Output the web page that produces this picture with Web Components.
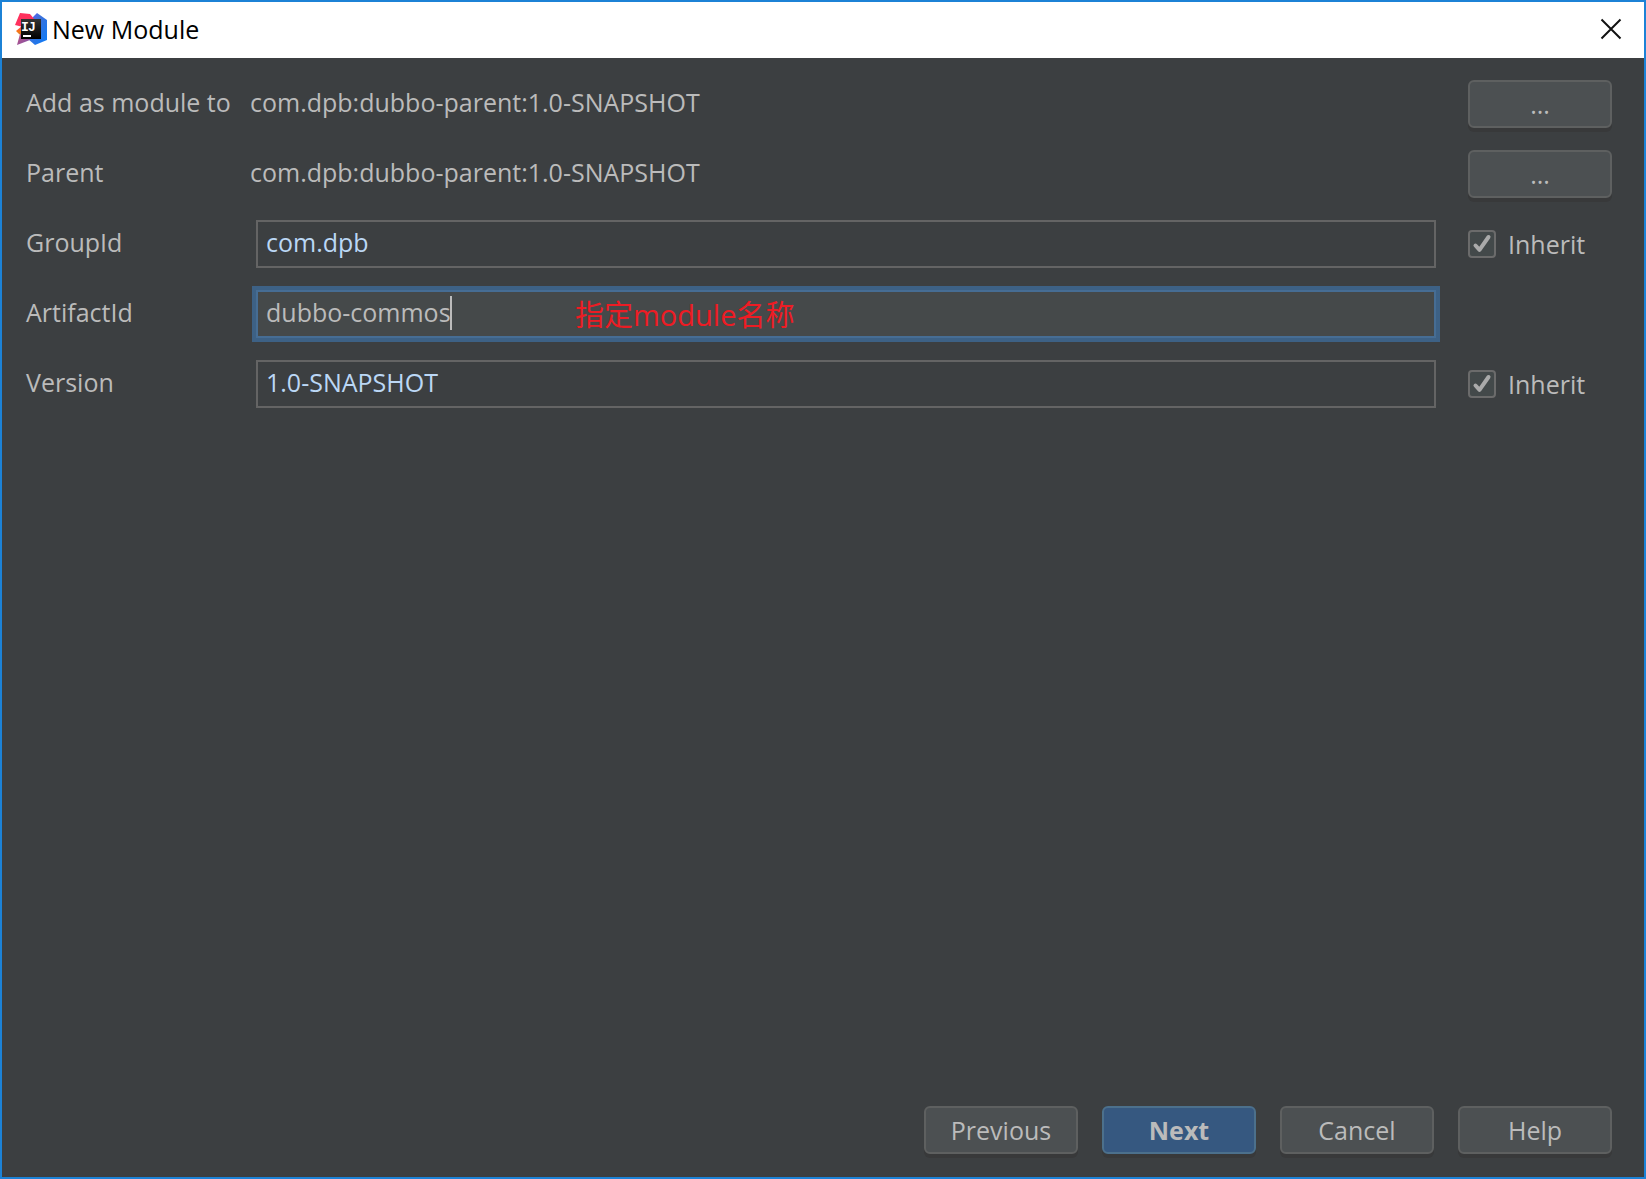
<!DOCTYPE html>
<html lang="en">
<head>
<meta charset="utf-8">
<title>New Module</title>
<style>
  :root {
    --bg: #3c3f41;
    --text: #bbbbbb;
    --line: #646464;
  }
  body {
    margin: 0;
    background: var(--bg);
    color: var(--text);
    font: 25px/34px "Open Sans", "Noto Sans", "Noto Sans CJK SC", sans-serif;
  }
</style>
</head>
<body>
<module-dialog>
  <value-row slot="rows" label="Add as module to" value="com.dpb:dubbo-parent:1.0-SNAPSHOT"></value-row>
  <value-row slot="rows" label="Parent" value="com.dpb:dubbo-parent:1.0-SNAPSHOT"></value-row>
  <input-row slot="rows" label="GroupId" value="com.dpb" inherited><inherit-box></inherit-box></input-row>
  <input-row slot="rows" label="ArtifactId" value="dubbo-commos" active><span slot="note">指定module名称</span></input-row>
  <input-row slot="rows" label="Version" value="1.0-SNAPSHOT" inherited><inherit-box></inherit-box></input-row>
  <dialog-button slot="actions">Previous</dialog-button>
  <dialog-button slot="actions" primary>Next</dialog-button>
  <dialog-button slot="actions">Cancel</dialog-button>
  <dialog-button slot="actions">Help</dialog-button>
</module-dialog>

<script>
const shadow = (el, html) => {
  const root = el.attachShadow({ mode: "open" });
  const t = document.createElement("template");
  t.innerHTML = html;
  root.append(t.content.cloneNode(true));
  return root;
};

const rowStyles = `
  :host { display: grid; grid-template-columns: 224px minmax(0, 1fr) 144px; height: 48px; }
  .caption { box-sizing: border-box; height: 48px; padding: 5px 0 9px; white-space: nowrap; }
`;

customElements.define("dialog-button", class extends HTMLElement {
  connectedCallback() {
    if (this.shadowRoot) return;
    shadow(this, `
      <style>
        :host { display: block; width: 154px; }
        button {
          display: block; box-sizing: border-box; width: 100%; height: 48px; padding: 0;
          font: inherit; color: inherit; background: #4c5052;
          border: 2px solid #5e6060; border-radius: 6px; box-shadow: 0 4px 0 #38393a;
        }
        :host([primary]) button { font-weight: 700; background: #365880; border-color: #4c708c; }
      </style>
      <button type="button"><slot></slot></button>`);
  }
});

customElements.define("inherit-box", class extends HTMLElement {
  connectedCallback() {
    if (this.shadowRoot) return;
    shadow(this, `
      <style>
        :host { display: block; }
        label { display: flex; align-items: center; gap: 12px; height: 48px; }
        .box { display: grid; width: 28px; height: 28px; }
        .box > * { grid-area: 1 / 1; }
        input {
          appearance: none; box-sizing: border-box; width: 28px; height: 28px; margin: 0;
          background: #43494a; border: 2px solid #6b6b6b; border-radius: 4px;
        }
        svg { pointer-events: none; }
        input:not(:checked) + svg { visibility: hidden; }
      </style>
      <label>
        <span class="box">
          <input type="checkbox" checked>
          <svg width="28" height="28" viewBox="0 0 28 28" fill="none" stroke="#aaaaaa" stroke-width="4" stroke-linecap="round" stroke-linejoin="round" aria-hidden="true"><path d="M7.5 15.5 L11.5 19.8 L20.5 7"/></svg>
        </span>
        <span>Inherit</span>
      </label>`);
  }
});

customElements.define("value-row", class extends HTMLElement {
  connectedCallback() {
    if (this.shadowRoot) return;
    const root = shadow(this, `
      <style>${rowStyles} dialog-button { width: 144px; }</style>
      <span class="caption" id="name"></span>
      <span class="caption" id="value"></span>
      <dialog-button>...</dialog-button>`);
    root.getElementById("name").textContent = this.getAttribute("label");
    root.getElementById("value").textContent = this.getAttribute("value");
  }
});

customElements.define("input-row", class extends HTMLElement {
  connectedCallback() {
    if (this.shadowRoot) return;
    const root = shadow(this, `
      <style>
        ${rowStyles}
        .field { position: relative; margin: 0 32px 0 6px; }
        input {
          display: block; box-sizing: border-box; width: 100%; height: 48px; margin: 0;
          padding: 3px 8px 7px; font: inherit; color: inherit; caret-color: transparent;
          background: transparent; border: 2px solid var(--line); border-radius: 0; outline: none;
        }
        :host([inherited]) input { color: #bbd7f5; }
        :host([active]) input { background: #45494a; border-color: #466d94; box-shadow: 0 0 0 4px #3d6185; }
        .caret { display: none; position: absolute; left: 194px; top: 6px; width: 2px; height: 34px; background: #bbbbbb; }
        :host([active]) .caret { display: block; }
        slot[name=note] {
          display: block; position: absolute; left: 319px; top: 4px; white-space: nowrap;
          font-size: 29px; line-height: 42px; color: #ed1c24; pointer-events: none;
        }
      </style>
      <label class="caption" for="input"></label>
      <div class="field">
        <input id="input" type="text">
        <span class="caret"></span>
        <slot name="note"></slot>
      </div>
      <slot></slot>`);
    root.querySelector("label").textContent = this.getAttribute("label");
    root.querySelector("input").value = this.getAttribute("value");
  }
});

customElements.define("title-bar", class extends HTMLElement {
  connectedCallback() {
    if (this.shadowRoot) return;
    shadow(this, `
      <style>
        :host { display: flex; align-items: center; box-sizing: border-box; height: 56px; padding: 0 20px 2px 13px; background: #fff; color: #000; }
        svg { display: block; flex: none; }
        h1 { flex: 1; margin: 0 0 0 5px; font: inherit; }
        button { padding: 0; border: 0; background: none; color: inherit; }
      </style>
      <svg width="32" height="32" viewBox="0 0 32 32" aria-hidden="true">
        <defs>
          <linearGradient id="blue" x1="0" y1="0" x2="1" y2="1"><stop offset="0" stop-color="#6b57ff"/><stop offset=".35" stop-color="#3f70d8"/><stop offset="1" stop-color="#087cfa"/></linearGradient>
          <linearGradient id="orange" x1="0" y1="0" x2="0" y2="1"><stop offset="0" stop-color="#fe315d"/><stop offset=".5" stop-color="#f97a12"/><stop offset="1" stop-color="#b07b58"/></linearGradient>
          <linearGradient id="purple" x1="0" y1="0" x2="1" y2="1"><stop offset="0" stop-color="#c4577d"/><stop offset="1" stop-color="#7a4fae"/></linearGradient>
          <linearGradient id="black" x1="0" y1="0" x2="0" y2="1"><stop offset="0" stop-color="#333"/><stop offset="1" stop-color="#000"/></linearGradient>
        </defs>
        <path fill="url(#blue)" d="M18 4 L22 0 L32 7 L32 27 L20 32 L13 26 Z"/>
        <path fill="url(#orange)" d="M1 18 L7 13 L9 24 L4 21 Z"/>
        <path fill="url(#purple)" d="M5 21 L15 25 L15 27 L2 32 Z"/>
        <path fill="#fe315d" d="M5 0 L15 1 L20 7 L8 14 L0 12 Z"/>
        <path fill="url(#black)" d="M6 6h20v20H6z"/>
        <path fill="#fff" d="M8 22h8v2H8z"/>
        <text y="18" fill="#fff" font-family="Liberation Mono, monospace" font-size="13" font-weight="700"><tspan x="6">I</tspan><tspan x="13">J</tspan></text>
      </svg>
      <h1>New Module</h1>
      <button type="button" aria-label="Close">
        <svg width="26" height="26" viewBox="0 0 26 26" fill="none" stroke="#111" stroke-width="2" aria-hidden="true"><path d="M3.5 3.5 L22.5 22.5 M22.5 3.5 L3.5 22.5"/></svg>
      </button>`);
  }
});

customElements.define("module-dialog", class extends HTMLElement {
  connectedCallback() {
    if (this.shadowRoot) return;
    shadow(this, `
      <style>
        :host { display: flex; flex-direction: column; box-sizing: border-box; min-height: 100vh; border: 2px solid #1c82d6; }
        form { display: flex; flex-direction: column; flex: 1; padding: 22px 32px 23px 24px; }
        .rows { display: flex; flex-direction: column; gap: 22px; flex: 1; }
        .actions { display: flex; justify-content: flex-end; gap: 24px; }
      </style>
      <title-bar></title-bar>
      <form>
        <div class="rows"><slot name="rows"></slot></div>
        <div class="actions"><slot name="actions"></slot></div>
      </form>`);
  }
});
</script>
</body>
</html>
